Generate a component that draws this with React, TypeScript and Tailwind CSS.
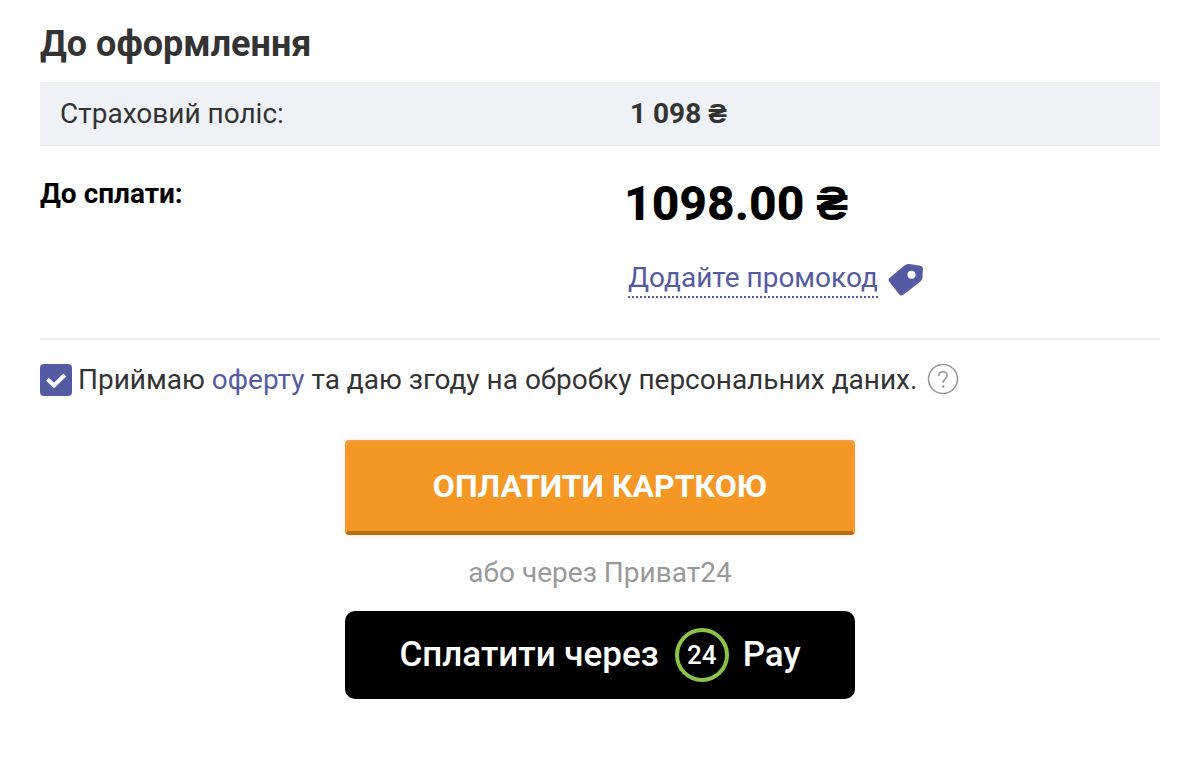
import { useState } from "react";

function TagIcon() {
  return (
    <svg viewBox="0 0 36 34" className="h-[34px] w-9 shrink-0" aria-hidden="true">
      <path
        fillRule="evenodd"
        fill="#555ba3"
        d="M2.4 14.2 16.3 2.6q2.4-2 5-1.6l11 1.7q2.6.5 2.6 3L34.5 14.500q-.2 2.500-2.100 3.900L15.700 31.600q-2.600 1.800-4.600-.4L1.300 18.700Q-.7 16.400 2.400 14.200ZM23.500 7.700a4 4 0 1 0 0 8 4 4 0 0 0 0-8Z"
      />
    </svg>
  );
}

function CheckIcon() {
  return (
    <svg viewBox="0 0 32 32" className="pointer-events-none col-start-1 row-start-1 size-8" aria-hidden="true">
      <path d="M7.500 15.200 14 21.500 24.800 11" fill="none" stroke="#fff" strokeWidth="4" />
    </svg>
  );
}

function HelpIcon() {
  return (
    <svg viewBox="0 0 32 32" className="size-8" aria-hidden="true">
      <g fill="none" stroke="currentColor" strokeWidth="1.600">
        <circle cx="16" cy="15" r="14.500" />
        <path d="M11.800 12c0-2.600 1.700-4.200 4.200-4.200s4.100 1.500 4.100 3.800c0 3.200-4 3.500-4 7.400" />
      </g>
      <circle cx="16.100" cy="22.500" r="1.200" fill="currentColor" />
    </svg>
  );
}

export default function App() {
  const [accepted, setAccepted] = useState(true);

  return (
    <main className="bg-white px-10 pt-5 pb-15 font-[Roboto,sans-serif] text-[28px] leading-8 text-[#333]">
      <h1 className="mb-3.5 text-4xl leading-12 font-bold">До оформлення</h1>

      <dl>
        <div className="grid grid-cols-2 bg-[#eef1f6] py-4">
          <dt className="pl-5">Страховий поліс:</dt>
          <dd className="pl-[30px] font-bold">
            1 098 <span className="font-['Liberation_Sans',sans-serif] leading-none">₴</span>
          </dd>
        </div>

        <div className="grid grid-cols-2 pt-8 text-black">
          <dt className="font-bold">До сплати:</dt>
          <dd className="pl-6 text-5xl leading-[52px] font-extrabold">
            1098.00 <span className="font-['Liberation_Sans',sans-serif] leading-none">₴</span>
          </dd>
        </div>
      </dl>

      <div className="grid grid-cols-2 border-b-2 border-[#ebebeb] pt-8 pb-10">
        <div className="col-start-2 flex items-center gap-2.5 pl-7">
          <button type="button" className="cursor-pointer border-b-2 border-dotted border-[#555ba3] pb-0.5 text-[#555ba3]">
            Додайте промокод
          </button>
          <TagIcon />
        </div>
      </div>

      <div className="flex items-center gap-2.5 pt-6">
        <div className="flex items-center gap-1.5">
          <span className="grid shrink-0">
            <input
              id="accept"
              type="checkbox"
              checked={accepted}
              onChange={(e) => setAccepted(e.target.checked)}
              className="col-start-1 row-start-1 size-8 appearance-none rounded-[4px] border-2 border-[#555ba3] bg-white checked:bg-[#555ba3]"
            />
            {accepted && <CheckIcon />}
          </span>
          <label htmlFor="accept">
            Приймаю{" "}
            <a href="#offer" className="text-[#555ba3]">
              оферту
            </a>{" "}
            та даю згоду на обробку персональних даних.
          </label>
        </div>
        <button type="button" aria-label="Довідка" className="shrink-0 text-[#999]">
          <HelpIcon />
        </button>
      </div>

      <div className="mx-auto flex max-w-[510px] flex-col pt-11 text-center">
        <button
          type="button"
          className="rounded-[4px] border-2 border-b-4 border-[#f49d3c] border-b-[#ba6d14] bg-[#f59725] py-7 text-[32px] leading-[33px] font-bold text-white uppercase shadow-[0_0_10px_rgba(186,109,20,0.12)]"
        >
          Оплатити карткою
        </button>
        <p className="py-[22px] text-[#999]">або через Приват24</p>
        <button
          type="button"
          className="flex h-[88px] items-center justify-center rounded-[10px] bg-black text-[35px] font-medium text-white"
        >
          Сплатити через
          <span className="mr-3.5 ml-4 flex size-[54px] items-center justify-center rounded-full border-4 border-[#8bc34a] text-[26px] leading-none">
            24
          </span>
          Pay
        </button>
      </div>
    </main>
  );
}
